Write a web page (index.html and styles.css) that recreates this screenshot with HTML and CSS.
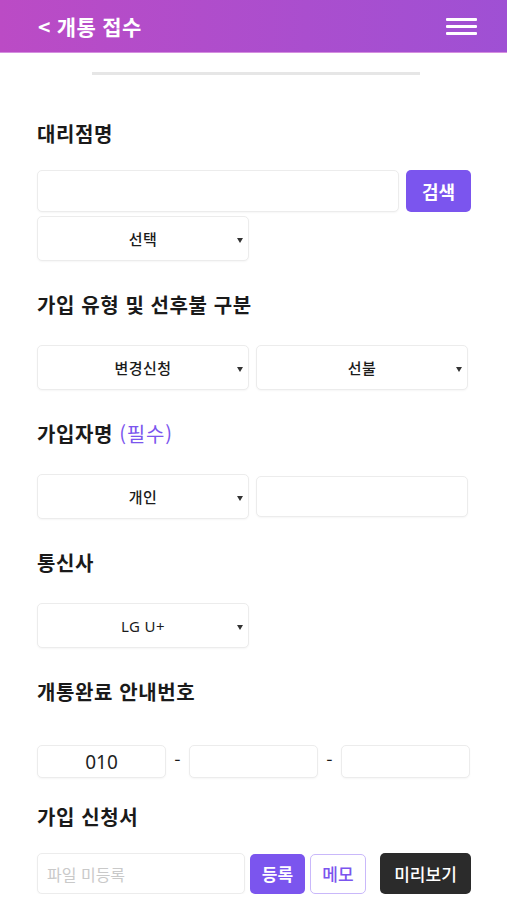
FILE: index.html
```html
<!DOCTYPE html>
<html lang="ko">
<head>
    <meta charset="UTF-8">
    <meta name="viewport" content="width=device-width, initial-scale=1.0">
    <title>개통 접수</title>
    <link rel="stylesheet" href="styles.css">
</head>
<body>

    <!-- 상단 바 -->
    <header class="topbar">
        <a href="#" class="back">&lt; 개통 접수</a>
        <button class="menu" type="button" aria-label="메뉴">
            <span></span><span></span><span></span>
        </button>
    </header>

    <div class="divider"></div>

    <main class="form">
        <!-- 대리점명 -->
        <section class="field field-first">
            <h2>대리점명</h2>
            <div class="row">
                <input type="text" class="box grow">
                <button type="button" class="btn btn-purple btn-search">검색</button>
            </div>
            <div class="row row-tight">
                <div class="select half"><select><option>선택</option></select></div>
            </div>
        </section>

        <!-- 가입 유형 -->
        <section class="field">
            <h2>가입 유형 및 선후불 구분</h2>
            <div class="row">
                <div class="select half"><select><option>변경신청</option></select></div>
                <div class="select half"><select><option>선불</option></select></div>
            </div>
        </section>

        <!-- 가입자명 -->
        <section class="field">
            <h2>가입자명 <span class="required">(필수)</span></h2>
            <div class="row row-center">
                <div class="select half"><select><option>개인</option></select></div>
                <input type="text" class="box half short">
            </div>
        </section>

        <!-- 통신사 -->
        <section class="field">
            <h2>통신사</h2>
            <div class="row">
                <div class="select half latin"><select><option>LG U+</option></select></div>
            </div>
        </section>

        <!-- 안내번호 -->
        <section class="field field-phone">
            <h2>개통완료 안내번호</h2>
            <div class="row phone">
                <input type="text" class="box tel" value="010">
                <span class="dash">-</span>
                <input type="text" class="box tel">
                <span class="dash">-</span>
                <input type="text" class="box tel">
            </div>
        </section>

        <!-- 신청서 -->
        <section class="field field-last">
            <h2>가입 신청서</h2>
            <div class="row file-row">
                <input type="text" class="box file" placeholder="파일 미등록">
                <button type="button" class="btn btn-purple btn-small">등록</button>
                <button type="button" class="btn btn-outline btn-small">메모</button>
                <button type="button" class="btn btn-dark">미리보기</button>
            </div>
        </section>
    </main>

</body>
</html>
```

FILE: styles.css
```css
/* 기본 */
* {
    margin: 0;
    padding: 0;
    box-sizing: border-box;
}

body {
    font-family: "Noto Sans CJK KR", "Noto Sans", sans-serif;
    color: #1b1b1b;
    background: #fff;
}

/* 상단 바 */
.topbar {
    height: 53px;
    display: flex;
    align-items: center;
    justify-content: space-between;
    padding: 0 30px 0 38px;
    background: linear-gradient(90deg, #bb4bc5, #9f50d4);
    border-bottom: 1px solid #d58ee0;
}

.back {
    color: #fff;
    text-decoration: none;
    font-size: 21px;
    font-weight: 700;
    letter-spacing: 0.3px;
}

.menu {
    width: 31px;
    height: 17px;
    display: flex;
    flex-direction: column;
    justify-content: space-between;
    background: none;
    border: none;
}

.menu span {
    display: block;
    height: 3px;
    background: #fff;
    border-radius: 1px;
}

.divider {
    width: 328px;
    height: 3px;
    margin: 19px 0 0 92px;
    background: #e6e6e6;
}

/* 폼 */
.form {
    padding: 0 36px 0 37px;
}

.field {
    padding-top: 30px;
}

.field-first {
    padding-top: 45px;
}

.field-last {
    padding-top: 25px;
}

.field h2 {
    font-size: 20px;
    line-height: 28px;
    font-weight: 700;
    letter-spacing: 0.6px;
    color: #1a1a1a;
    margin-bottom: 26px;
}

.field-first h2,
.field-last h2 {
    margin-bottom: 22px;
}

.field-phone h2 {
    margin-bottom: 39px;
}

.required {
    color: #7b55ee;
    font-weight: 400;
    letter-spacing: 0.8px;
}

.row {
    display: flex;
    gap: 7px;
}

.row-tight {
    margin-top: 4px;
}

.row-center {
    align-items: center;
}

.box {
    height: 42px;
    border: 1px solid #ececec;
    border-radius: 5px;
    background: #fff;
    box-shadow: 0 1px 2px rgba(0, 0, 0, 0.04);
    font-family: inherit;
    font-size: 16px;
    outline: none;
}

.grow {
    flex: 1;
}

.half {
    width: 212px;
}

.short {
    height: 41px;
}

/* 셀렉트 */
.select {
    position: relative;
    height: 45px;
}

.select select {
    appearance: none;
    -webkit-appearance: none;
    width: 100%;
    height: 100%;
    border: 1px solid #ececec;
    border-radius: 5px;
    background: #fff;
    box-shadow: 0 1px 2px rgba(0, 0, 0, 0.04);
    font-family: "Noto Sans CJK KR", sans-serif;
    font-size: 15px;
    font-weight: 500;
    letter-spacing: 0.4px;
    color: #1b1b1b;
    text-align: center;
    text-align-last: center;
    padding: 0 4px;
}

.latin select {
    font-family: "Noto Sans", sans-serif;
    font-weight: 400;
    font-size: 15px;
}

.select::after {
    content: "";
    position: absolute;
    right: 6px;
    top: 50%;
    margin-top: -1px;
    border-left: 3px solid transparent;
    border-right: 3px solid transparent;
    border-top: 5px solid #333;
    pointer-events: none;
}

/* 버튼 */
.btn {
    border: none;
    border-radius: 5px;
    font-family: inherit;
    font-weight: 700;
    cursor: pointer;
}

.btn-purple {
    background: #7b55ee;
    color: #fff;
}

.btn-search {
    width: 65px;
    height: 42px;
    font-size: 18px;
}

.btn-small {
    width: 55px;
    height: 40px;
    font-size: 17px;
}

.btn-outline {
    background: #fff;
    color: #7b55ee;
    border: 1px solid #c9b8fa;
    width: 56px;
    font-weight: 500;
}

.btn-dark {
    background: #2b2b2b;
    color: #fff;
    width: 91px;
    height: 41px;
    font-size: 17px;
    font-weight: 500;
    margin-left: 9px;
}

/* 전화번호 */
.phone {
    align-items: center;
    gap: 0;
}

.tel {
    width: 129px;
    height: 33px;
    text-align: center;
    font-family: "Noto Sans", sans-serif;
    font-size: 19px;
    color: #1f1f1f;
}

.dash {
    width: 23px;
    text-align: center;
    font-size: 18px;
    line-height: 1;
    margin-top: -6px;
}

/* 신청서 */
.file-row {
    gap: 5px;
    align-items: center;
}

.file {
    width: 208px;
    height: 41px;
    padding: 0 9px;
    font-size: 16px;
}

.file::placeholder {
    color: #c9c9c9;
}
```
